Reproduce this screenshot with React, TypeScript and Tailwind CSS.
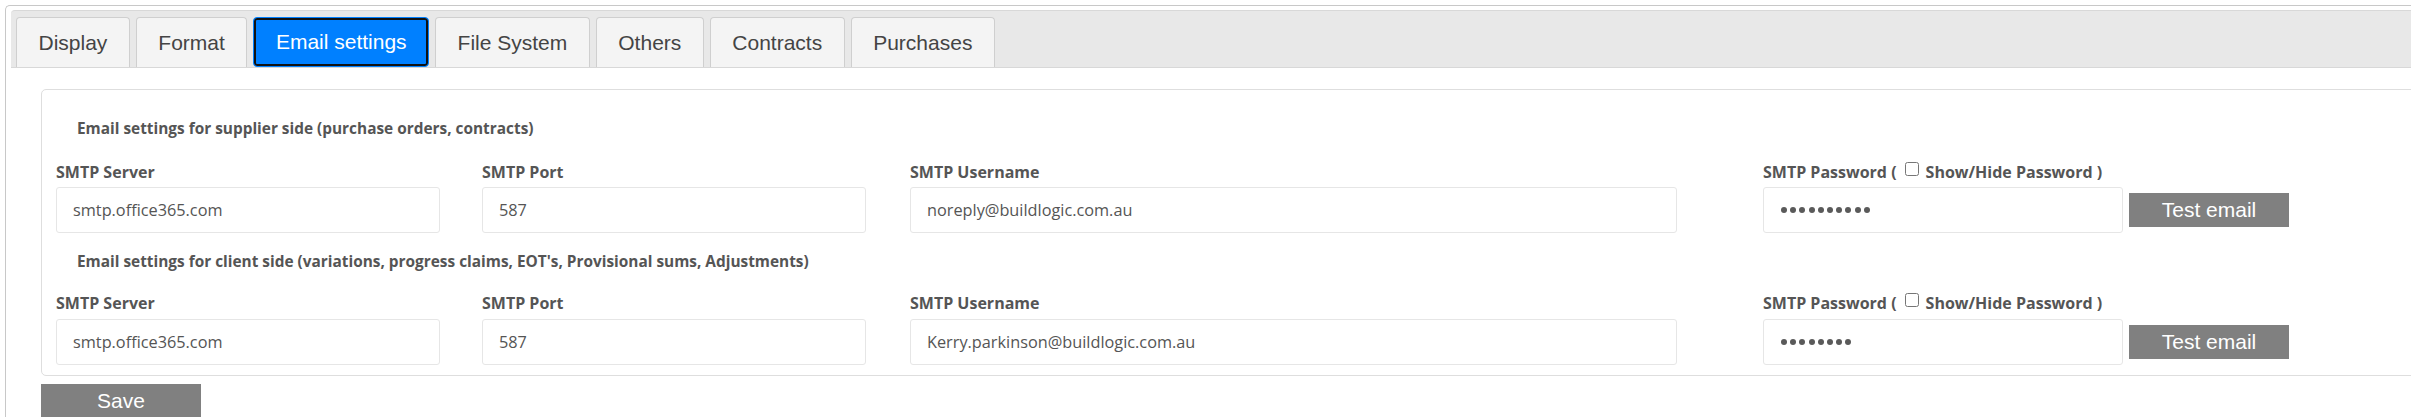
import React from "react";

const tabs = ["Display", "Format", "Email settings", "File System", "Others", "Contracts", "Purchases"];

function Dots({ n }: { n: number }) {
  return (
    <div className="h-[46px] w-[360px] border border-[#e6e6e6] rounded-[3px] px-[17px] bg-white flex items-center gap-[3.2px]">
      {Array.from({ length: n }).map((_, i) => (
        <span key={i} className="w-[6px] h-[6px] rounded-full bg-[#5a5a5a]" />
      ))}
    </div>
  );
}

function Section({ title, user, pw, labelGap, inputGap }: { title: string; user: string; pw: number; labelGap: string; inputGap: string }) {
  const inputCls = `${inputGap} h-[46px] border border-[#e6e6e6] rounded-[3px] px-[16px] text-[16.3px] text-[#555] bg-white outline-none`;
  const labelCls = "h-[22px] leading-[22px] text-[16px] font-bold text-[#555]";
  return (
    <div>
      <div className="pl-[21px] h-[22px] leading-[22px] text-[15.4px] font-bold text-[#555]">{title}</div>
      <div className={`flex items-start ${labelGap}`}>
        <div className="w-[426px] flex flex-col">
          <div className={labelCls}>SMTP Server</div>
          <input readOnly value="smtp.office365.com" className={`${inputCls} w-[384px]`} />
        </div>
        <div className="w-[428px] flex flex-col">
          <div className={labelCls}>SMTP Port</div>
          <input readOnly value="587" className={`${inputCls} w-[384px]`} />
        </div>
        <div className="w-[853px] flex flex-col">
          <div className={labelCls}>SMTP Username</div>
          <input readOnly value={user} className={`${inputCls} w-[767px]`} />
        </div>
        <div className="flex flex-col">
          <div className={`${labelCls} flex items-center`}>
            <span>SMTP Password (</span>
            <input type="checkbox" className="ml-[8px] mr-[7px] mb-[6px] w-[14px] h-[14px] m-0" />
            <span>Show/Hide Password )</span>
          </div>
          <div className={`${inputGap} flex items-center`}>
            <Dots n={pw} />
            <button className="ml-[6px] h-[34px] w-[160px] bg-[#808080] text-white text-[21px] font-['Liberation_Sans',Arial,sans-serif]">
              Test email
            </button>
          </div>
        </div>
      </div>
    </div>
  );
}

export default function App() {
  return (
    <div className="h-[417px] w-full overflow-hidden bg-white">
      <div className="ml-[5px] mt-[5px] w-[2600px] h-[430px] border-l border-t border-[#c8c8c8] rounded-tl-[5px] pl-[5px] pt-[4px] font-['Open_Sans',sans-serif]">
        <div className="h-[58px] bg-[#e8e8e8] border-t border-b border-[#d8d8d8] rounded-tl-[4px] flex items-end gap-[6px] pl-[5px] font-['Liberation_Sans',Arial,sans-serif]">
          {tabs.map((t) =>
            t === "Email settings" ? (
              <div
                key={t}
                className="h-[50px] px-[21.5px] flex items-center border border-[#0080ff] rounded-[4px] bg-[#0080ff] text-white text-[21px] shadow-[inset_0_0_0_2px_#111]"
              >
                {t}
              </div>
            ) : (
              <div
                key={t}
                className="h-[50px] px-[21.5px] flex items-center border border-b-0 border-[#cfcfcf] rounded-t-[4px] bg-[#f4f4f4] text-[#444] text-[21px]"
              >
                {t}
              </div>
            )
          )}
        </div>
        <div className="ml-[30px] mt-[21px] border border-[#dedede] rounded-[5px] pl-[14px] pt-[28px] pb-[10px]">
          <Section
            title="Email settings for supplier side (purchase orders, contracts)"
            user="noreply@buildlogic.com.au"
            pw={10}
            labelGap="mt-[21px]"
            inputGap="mt-[4px]"
          />
          <div className="mt-[18px]">
            <Section
              title="Email settings for client side (variations, progress claims, EOT's, Provisional sums, Adjustments)"
              user="Kerry.parkinson@buildlogic.com.au"
              pw={8}
              labelGap="mt-[19px]"
              inputGap="mt-[5px]"
            />
          </div>
        </div>
        <button className="ml-[30px] mt-[8px] h-[34px] w-[160px] bg-[#808080] text-white text-[21px] font-['Liberation_Sans',Arial,sans-serif]">
          Save
        </button>
      </div>
    </div>
  );
}
